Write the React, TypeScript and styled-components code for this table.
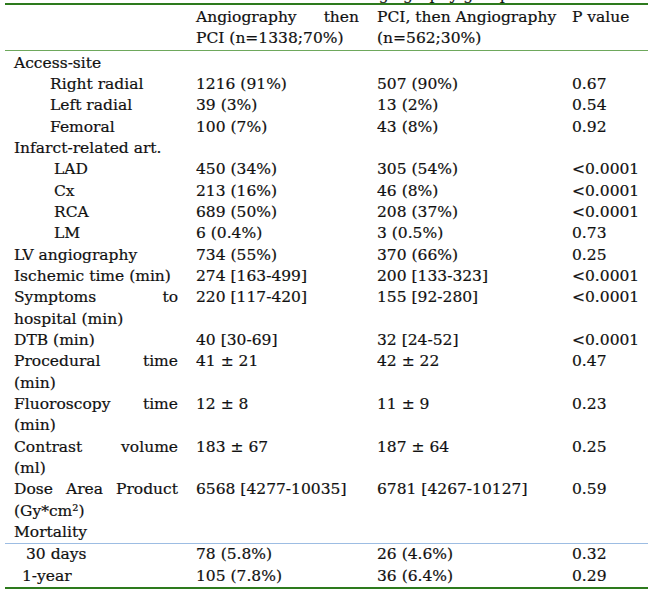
import React from 'react';
import styled, { createGlobalStyle } from 'styled-components';

const Global = createGlobalStyle`
  html, body { margin: 0; padding: 0; background: #ffffff; overflow: hidden; }
  body {
    font-family: "DejaVu Serif", "Liberation Serif", serif;
    color: #111111;
    -webkit-text-stroke: 0.2px #111111;
  }
`;

const Page = styled.div`
  width: 648px;
  height: 591px;
  overflow: hidden;
  padding-left: 5px;
  box-sizing: border-box;
`;

const Caption = styled.div`
  height: 3px;
  overflow: hidden;
  display: flex;
  align-items: flex-end;
  padding-left: 330px;
  font-size: 15.5px;
  line-height: 15px;
  white-space: nowrap;
`;

const Table = styled.table`
  border-collapse: collapse;
  table-layout: fixed;
  width: 660px;
  font-size: 15.5px;
  line-height: 21.33px;
  border-top: 2px solid #2d7a1d;
  border-bottom: 2px solid #2d7a1d;
`;

const Col = styled.col<{ $w: number }>`
  width: ${(p) => p.$w}px;
`;

const HeadRow = styled.tr`
  border-bottom: 1px solid #6ea85c;
`;

const BodyRow = styled.tr<{ $divider?: boolean }>`
  border-bottom: ${(p) => (p.$divider ? '1px solid #9dbde3' : 'none')};
`;

const Cell = styled.td<{ $indent?: number; $top?: number }>`
  padding: ${(p) => p.$top ?? 0}px 9px 0 ${(p) => 9 + (p.$indent ?? 0)}px;
  vertical-align: top;
  text-align: left;
  white-space: nowrap;
`;

const HeadCell = styled.th`
  padding: 2px 9px 0 9px;
  vertical-align: top;
  text-align: left;
  font-weight: normal;
  white-space: nowrap;
`;

const JustLine = styled.span`
  display: block;
  text-align: justify;
  text-align-last: justify;
`;

type Row = {
  label: string;
  cont?: string;
  indent?: number;
  a?: string;
  b?: string;
  p?: string;
  divider?: boolean;
};

const rows: Row[] = [
  { label: 'Access-site' },
  { label: 'Right radial', indent: 36, a: '1216 (91%)', b: '507 (90%)', p: '0.67' },
  { label: 'Left radial', indent: 36, a: '39 (3%)', b: '13 (2%)', p: '0.54' },
  { label: 'Femoral', indent: 36, a: '100 (7%)', b: '43 (8%)', p: '0.92' },
  { label: 'Infarct-related art.' },
  { label: 'LAD', indent: 40, a: '450 (34%)', b: '305 (54%)', p: '<0.0001' },
  { label: 'Cx', indent: 40, a: '213 (16%)', b: '46 (8%)', p: '<0.0001' },
  { label: 'RCA', indent: 40, a: '689 (50%)', b: '208 (37%)', p: '<0.0001' },
  { label: 'LM', indent: 40, a: '6 (0.4%)', b: '3 (0.5%)', p: '0.73' },
  { label: 'LV angiography', a: '734 (55%)', b: '370 (66%)', p: '0.25' },
  { label: 'Ischemic time (min)', a: '274 [163-499]', b: '200 [133-323]', p: '<0.0001' },
  { label: 'Symptoms to', cont: 'hospital (min)', a: '220 [117-420]', b: '155 [92-280]', p: '<0.0001' },
  { label: 'DTB (min)', a: '40 [30-69]', b: '32 [24-52]', p: '<0.0001' },
  { label: 'Procedural time', cont: '(min)', a: '41 ± 21', b: '42 ± 22', p: '0.47' },
  { label: 'Fluoroscopy time', cont: '(min)', a: '12 ± 8', b: '11 ± 9', p: '0.23' },
  { label: 'Contrast volume', cont: '(ml)', a: '183 ± 67', b: '187 ± 64', p: '0.25' },
  { label: 'Dose Area Product', cont: '(Gy*cm²)', a: '6568 [4277-10035]', b: '6781 [4267-10127]', p: '0.59' },
  { label: 'Mortality', divider: true },
  { label: '30 days', indent: 12, a: '78 (5.8%)', b: '26 (4.6%)', p: '0.32' },
  { label: '1-year', indent: 8, a: '105 (7.8%)', b: '36 (6.4%)', p: '0.29' },
];

export default function App() {
  return (
    <Page>
      <Global />
      <Caption>LV angiography group</Caption>
      <Table>
        <colgroup>
          <Col $w={182} />
          <Col $w={181} />
          <Col $w={195} />
          <Col $w={102} />
        </colgroup>
        <thead>
          <HeadRow>
            <HeadCell />
            <HeadCell>
              <JustLine>Angiography then</JustLine>
              PCI (n=1338;70%)
            </HeadCell>
            <HeadCell>
              PCI, then Angiography
              <br />
              (n=562;30%)
            </HeadCell>
            <HeadCell>P value</HeadCell>
          </HeadRow>
        </thead>
        <tbody>
          {rows.map((r, i) => (
            <BodyRow key={r.label} $divider={r.divider}>
              <Cell $indent={r.indent} $top={i === 0 ? 2 : 0}>
                {r.cont ? (
                  <>
                    <JustLine>{r.label}</JustLine>
                    {r.cont}
                  </>
                ) : (
                  r.label
                )}
              </Cell>
              <Cell $top={i === 0 ? 2 : 0}>{r.a}</Cell>
              <Cell $top={i === 0 ? 2 : 0}>{r.b}</Cell>
              <Cell $top={i === 0 ? 2 : 0}>{r.p}</Cell>
            </BodyRow>
          ))}
        </tbody>
      </Table>
    </Page>
  );
}
